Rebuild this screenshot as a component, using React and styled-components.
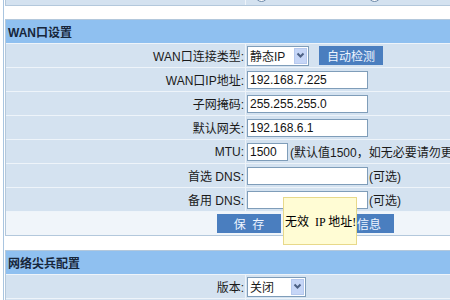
import React from "react";
import styled, { createGlobalStyle } from "styled-components";

const GlobalStyle = createGlobalStyle`
  html, body {
    margin: 0;
    padding: 0;
    background: #fff;
    overflow: hidden;
  }
  body {
    font-family: "Liberation Sans", "Noto Sans CJK SC", sans-serif;
    font-size: 12px;
    color: #1a1a1a;
  }
`;

const Page = styled.div`
  position: relative;
  padding-left: 3px;
  width: 640px;
  height: 300px;
`;

const Frame = styled.div`
  border-left: 1px solid #a9c5e0;
  padding-left: 1px;
  height: 100%;
`;

const Table = styled.div`
  display: grid;
  grid-template-columns: 239px 1fr;
  gap: 1px;
  width: 600px;
  background: #eef4fa;
  border: 1px solid #b3c8dc;
  border-top: ${p => (p.$cut ? "none" : "1px solid #b3c8dc")};
  margin-top: ${p => p.$mt || 0}px;
`;

const Header = styled.div`
  grid-column: 1 / -1;
  height: 23px;
  display: flex;
  align-items: center;
  padding-left: 2px;
  background: #8fc0f0;
  color: #17263a;
  font-weight: bold;
`;

const Label = styled.div`
  height: ${p => p.$h || 23}px;
  display: flex;
  align-items: center;
  justify-content: flex-end;
  padding-right: 1px;
  background: #d4e2f0;
  white-space: nowrap;
`;

const Value = styled.div`
  height: ${p => p.$h || 23}px;
  display: flex;
  align-items: ${p => (p.$bottom ? "flex-end" : "center")};
  padding-left: 1px;
  background: #d4e2f0;
  white-space: nowrap;
  overflow: hidden;
`;

const Full = styled.div`
  grid-column: 1 / -1;
  height: 23px;
  display: flex;
  align-items: center;
  padding-left: 211px;
  background: #f0f5fa;
`;

const Input = styled.input`
  box-sizing: border-box;
  width: ${p => p.$w}px;
  height: 18px;
  margin: 0;
  padding: 0 2px;
  border: 1px solid #7f9db9;
  background: #fff;
  color: #111;
  font-family: inherit;
  font-size: 12px;
  outline: none;
`;

const Hint = styled.span`
  margin-left: ${p => p.$ml || 1}px;
`;

const Select = styled.div`
  box-sizing: border-box;
  width: ${p => p.$w}px;
  height: 20px;
  display: flex;
  align-items: center;
  justify-content: space-between;
  padding: 0 1px 0 2px;
  border: 1px solid #7f9db9;
  background: #fff;
`;

const Arrow = styled.span`
  box-sizing: border-box;
  width: 13px;
  height: 16px;
  display: flex;
  align-items: center;
  justify-content: center;
  background: #c6d6f7;
  border: 1px solid #b6c9ee;
`;

const Button = styled.div`
  width: ${p => p.$w}px;
  height: 19px;
  margin-left: ${p => p.$ml || 0}px;
  display: flex;
  align-items: center;
  justify-content: center;
  background: #4a7ebf;
  color: #eef5ff;
  white-space: pre;
`;

const RadioGroup = styled.div`
  display: flex;
  align-items: flex-end;
  padding: 0 0 3px 8px;
  color: #333;
`;

const Radio = styled.span`
  width: 11px;
  height: 11px;
  margin: 0 4px 0 ${p => p.$ml || 0}px;
  border: 1px solid #6b88a8;
  border-radius: 50%;
  background: #fff;
`;

const Tip = styled.div`
  position: absolute;
  left: 283px;
  top: 197px;
  width: 74px;
  height: 48px;
  box-sizing: border-box;
  display: flex;
  align-items: center;
  padding-left: 1px;
  background: #fffcd4;
  border: 1px solid #e8d98a;
  color: #000;
  font-family: "Liberation Serif", "Noto Sans CJK SC", serif;
  font-size: 12px;
  white-space: pre;
  z-index: 2;
`;

function Chevron() {
  return (
    <svg width="9" height="7" viewBox="0 0 9 7">
      <path d="M1.5 1.5 L4.5 4.5 L7.5 1.5" fill="none" stroke="#4d6185" strokeWidth="2" />
    </svg>
  );
}

function Drop({ w, children }) {
  return (
    <Select $w={w}>
      <span>{children}</span>
      <Arrow><Chevron /></Arrow>
    </Select>
  );
}

export default function App() {
  return (
    <Page>
      <GlobalStyle />
      <Frame>
        <Table $cut>
          <Label $h={5} />
          <Value $h={5} $bottom>
            <RadioGroup>
              <Radio />
              <span>动态获取地址</span>
              <Radio $ml={24} />
              <span>静态指定地址</span>
            </RadioGroup>
          </Value>
        </Table>

        <Table $mt={13}>
          <Header>WAN口设置</Header>
          <Label>WAN口连接类型:</Label>
          <Value>
            <Drop w={62}>静态IP</Drop>
            <Button $w={64} $ml={10}>自动检测</Button>
          </Value>
          <Label>WAN口IP地址:</Label>
          <Value><Input $w={121} value="192.168.7.225" readOnly /></Value>
          <Label>子网掩码:</Label>
          <Value><Input $w={121} value="255.255.255.0" readOnly /></Value>
          <Label>默认网关:</Label>
          <Value><Input $w={121} value="192.168.6.1" readOnly /></Value>
          <Label>MTU:</Label>
          <Value>
            <Input $w={41} value="1500" readOnly />
            <Hint $ml={2}>(默认值1500，如无必要请勿更改)</Hint>
          </Value>
          <Label>首选 DNS:</Label>
          <Value>
            <Input $w={121} value="" readOnly />
            <Hint>(可选)</Hint>
          </Value>
          <Label>备用 DNS:</Label>
          <Value>
            <Input $w={121} value="" readOnly />
            <Hint>(可选)</Hint>
          </Value>
          <Full>
            <Button $w={64}>{"保  存"}</Button>
            <Button $w={98} $ml={15}>获取网络信息</Button>
          </Full>
        </Table>

        <Table $mt={14}>
          <Header>网络尖兵配置</Header>
          <Label>版本:</Label>
          <Value><Drop w={59}>关闭</Drop></Value>
          <Label>状态:</Label>
          <Value />
        </Table>
      </Frame>
      <Tip>{"无效  IP 地址!"}</Tip>
    </Page>
  );
}
